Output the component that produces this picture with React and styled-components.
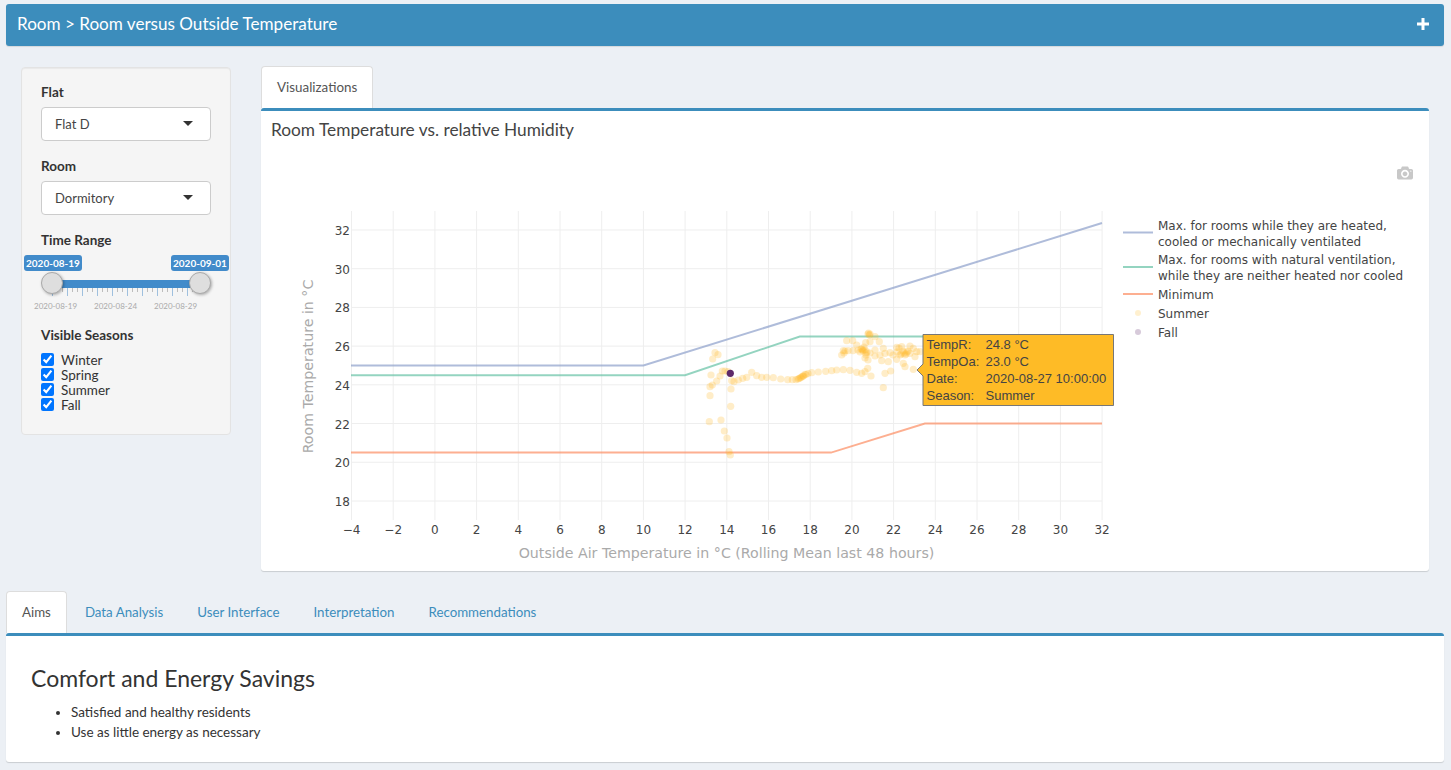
import React from 'react'
import styled, { createGlobalStyle } from 'styled-components'

const X = (v) => 351.5 + (v + 4) * 20.85
const Y = (v) => 501 - (v - 18) * 19.36
const xTicks = Array.from({ length: 19 }, (_, i) => -4 + i * 2)
const yTicks = [18, 20, 22, 24, 26, 28, 30, 32]

const summer = [
  [715, 352.7], [718, 354.7], [712.7, 359], [711, 375], [710, 386.7], [712.3, 385], [716.7, 381], [720, 376],
  [722.3, 371], [725, 371], [728, 371.7], [731.7, 380.7], [734, 381.7], [738.3, 380], [742.7, 378.3], [746.7, 377.3],
  [751.7, 372.3], [756.7, 375.7], [761.7, 377.3], [766.7, 377.3], [773.3, 377.7], [780.7, 379], [787.7, 379.7],
  [792.3, 379.7], [796, 379.7], [798, 379], [800, 378], [802, 376.5], [803, 376], [805, 374.3], [808, 373.5],
  [799, 378.5], [801, 377.5], [803.5, 376], [806, 374.5],
  [811.7, 372.7], [818.3, 372], [825.7, 371.3], [831.7, 370.7], [836.7, 370], [843.3, 369.7], [850, 370.3],
  [856.7, 372.3], [861.7, 373.3], [865, 371.7], [867.7, 368.3], [871, 376], [883.3, 387.7], [890.7, 371], [885, 373.3],
  [731, 389], [710, 395.7], [730.7, 406.3], [709.3, 421.7], [721, 420], [724.3, 431], [727, 438], [729, 451.7], [730.3, 455],
  [868, 334], [870, 334], [868.5, 333], [869.5, 335], [875, 336.7], [846.7, 340.7], [852.7, 340.7], [856.7, 345], [865.7, 342.7], [870, 341.7],
  [879.3, 341.7], [843.3, 350.7], [841.7, 355], [848, 350.7], [853, 350.7], [858, 350], [863, 350], [866, 353],
  [865, 358], [868, 360], [870, 353], [875, 356], [880, 355], [885, 353.3], [890, 352.7], [896.7, 347.3], [901.7, 346.7],
  [910, 346], [913.3, 348.3], [893, 355], [900, 355], [905, 355], [910, 353.3], [916.7, 351.7], [920, 351.7],
  [881.7, 360.7], [888.3, 361.7], [896.7, 359.3], [903.3, 363.3], [905, 366.7], [913.3, 369.3], [915, 356.7],
  [875, 350], [883.3, 348.3], [862, 349], [864, 347], [860, 352], [897, 352], [903, 351], [907, 352], [899, 348],
  [861, 349], [863, 351], [865, 350], [866, 355], [867, 352], [901, 354], [904, 353], [906, 354], [908, 351], [845, 351], [844, 353]
]

const GlobalStyle = createGlobalStyle`
  html, body {
    margin: 0;
    height: 770px;
    overflow: hidden;
    background: #ecf0f5;
    font-family: Lato, "Open Sans", sans-serif;
    font-size: 14px;
    color: #333;
  }
`

const Page = styled.div`
  width: 1451px;
  height: 770px;
  padding-top: 4px;
  box-sizing: border-box;
`

const Header = styled.div`
  margin: 0 7px 0 6px;
  height: 42px;
  padding: 0 15px 3px 11px;
  display: flex;
  align-items: center;
  justify-content: space-between;
  box-sizing: border-box;
  background: #3c8dbc;
  border-radius: 3px;
  box-shadow: 0 1px 1px rgba(0, 0, 0, 0.1);
  color: #fff;
  font-size: 17.1px;
`

const Plus = styled.svg`
  width: 12px;
  height: 12px;
  fill: #fff;
`

const Main = styled.div`
  display: flex;
  gap: 30px;
  margin: 20px 22px 0 21px;
`

const Sidebar = styled.form`
  width: 210px;
  height: 368px;
  margin-top: 1px;
  padding: 17px 19px 0;
  box-sizing: border-box;
  background: #f5f5f5;
  border: 1px solid #e3e3e3;
  border-radius: 4px;
  box-shadow: inset 0 1px 1px rgba(0, 0, 0, 0.05);
`

const Label = styled.div`
  font-size: 13.5px;
  font-weight: 700;
  line-height: 14px;
  color: #333;
  margin-bottom: 8px;
`

const Select = styled.div`
  height: 34px;
  margin-bottom: 18px;
  padding: 0 17px 0 13px;
  display: flex;
  align-items: center;
  justify-content: space-between;
  box-sizing: border-box;
  background: #fff;
  border: 1px solid #ccc;
  border-radius: 4px;
  font-size: 13px;
  color: #444;
`

const Caret = styled.span`
  width: 0;
  height: 0;
  border-left: 5px solid transparent;
  border-right: 5px solid transparent;
  border-top: 5px solid #333;
  margin-top: -2px;
`

const Slider = styled.div`
  position: relative;
  height: 73px;
  margin: 0 -1px;
`

const Track = styled.div`
  position: absolute;
  left: 12px;
  top: 25px;
  width: 148px;
  height: 8px;
  background: #428bca;
`

const Handle = styled.div`
  position: absolute;
  left: ${(p) => p.$left}px;
  top: 17px;
  width: 22px;
  height: 22px;
  box-sizing: border-box;
  border-radius: 50%;
  background: #dedede;
  border: 1px solid #aaa;
  box-shadow: 1px 1px 3px rgba(0, 0, 0, 0.3);
`

const Bubble = styled.div`
  position: absolute;
  left: ${(p) => p.$left}px;
  top: 0;
  height: 16px;
  padding: 0 2px;
  border-radius: 3px;
  background: #428bca;
  color: #fff;
  font-size: 10px;
  font-weight: 700;
  line-height: 16px;
  white-space: nowrap;
`

const Ticks = styled.div`
  position: absolute;
  left: 12px;
  top: 33px;
  width: 148px;
  height: 8px;
  background:
    repeating-linear-gradient(90deg, #9fc0de 0 1px, transparent 1px 15px) 0 0 / 100% 8px no-repeat,
    repeating-linear-gradient(90deg, #bdbdbd 0 1px, transparent 1px 5px) 0 0 / 100% 4px no-repeat;
`

const TickLabel = styled.div`
  position: absolute;
  left: ${(p) => p.$left}px;
  top: 45px;
  font-size: 8px;
  line-height: 12px;
  color: #aaa;
`

const Check = styled.label`
  display: flex;
  align-items: center;
  height: 15px;
  font-size: 13.5px;
  color: #333;

  input {
    width: 13px;
    height: 13px;
    margin: 0 7px 0 0;
  }
`

const Checks = styled.div`
  padding-top: 2px;
`

const Content = styled.div`
  flex: 1;
`

const Tabs = styled.div`
  display: flex;
  height: 42px;
`

const Tab = styled.div`
  display: flex;
  align-items: center;
  padding: 0 15px 2px;
  box-sizing: border-box;
  font-size: 13.4px;
  color: ${(p) => (p.$active ? '#555' : '#3c8dbc')};
  background: ${(p) => (p.$active ? '#fff' : 'transparent')};
  border: 1px solid ${(p) => (p.$active ? '#ddd' : 'transparent')};
  border-bottom: 0;
  border-radius: 4px 4px 0 0;
`

const NoteTab = styled(Tab)`
  padding: 0 16px 2px;
  font-size: 13.3px;

  &:first-child {
    padding: 0 15px 2px;
    margin-right: 1px;
  }
`

const Panel = styled.div`
  box-sizing: border-box;
  background: #fff;
  border-top: 3px solid #3c8dbc;
  border-radius: 3px;
  box-shadow: 0 1px 1px rgba(0, 0, 0, 0.15);
`

const PlotPanel = styled(Panel)`
  position: relative;
  height: 463px;
`

const PlotTitle = styled.h3`
  margin: 0;
  padding: 9px 10px 0;
  height: 34px;
  box-sizing: border-box;
  font-size: 17.3px;
  font-weight: 400;
  line-height: 20px;
  color: #444;
`

const Plot = styled.svg`
  display: block;
  width: 1168px;
  height: 426px;
  font-family: "DejaVu Sans", Verdana, sans-serif;
  font-size: 12px;
`

const Bottom = styled.div`
  margin: 20px 7px 0 6px;
`

const TextPanel = styled(Panel)`
  height: 129px;
  padding: 29px 25px 0;
`

const Heading = styled.h2`
  margin: 0 0 11px;
  font-size: 23px;
  font-weight: 400;
  line-height: 26px;
  color: #333;
`

const Bullets = styled.ul`
  margin: 0;
  padding-left: 40px;
  font-size: 13.5px;
  line-height: 20px;
  color: #333;
`

const seasons = ['Winter', 'Spring', 'Summer', 'Fall']
const legend = [
  { y: 232.5, color: '#8da0cb', lines: [[230, 'Max. for rooms while they are heated,'], [246, 'cooled or mechanically ventilated']] },
  { y: 267, color: '#66c2a5', lines: [[264, 'Max. for rooms with natural ventilation,'], [280, 'while they are neither heated nor cooled']] },
  { y: 294, color: '#fc8d62', lines: [[299, 'Minimum']] }
]
const tipRows = [
  ['TempR:', '24.8 °C', 349],
  ['TempOa:', '23.0 °C', 366],
  ['Date:', '2020-08-27 10:00:00', 383],
  ['Season:', 'Summer', 400]
]

function Chart() {
  return (
    <Plot viewBox="261 145 1168 426">
      {xTicks.map((t) => (
        <line key={t} x1={X(t)} x2={X(t)} y1="211" y2="520" stroke="#eee" />
      ))}
      {yTicks.map((t) => (
        <line key={t} x1="351" x2="1102" y1={Y(t)} y2={Y(t)} stroke="#eee" />
      ))}
      {yTicks.map((t) => (
        <text key={t} x="350" y={Y(t) + 5} textAnchor="end" fill="#444">{t}</text>
      ))}
      {xTicks.map((t) => (
        <text key={t} x={X(t)} y="534" textAnchor="middle" fill="#444">{t < 0 ? `−${-t}` : t}</text>
      ))}
      <text x="726.5" y="558" textAnchor="middle" fontSize="14.2" fill="#aaa">
        Outside Air Temperature in °C (Rolling Mean last 48 hours)
      </text>
      <text transform="translate(313 366.500) rotate(-90)" textAnchor="middle" fontSize="14.2" fill="#aaa">
        Room Temperature in °C
      </text>

      <g fill="none" strokeWidth="2" strokeOpacity="0.7">
        <polyline stroke="#8da0cb" points={`351,${Y(25)} ${X(10)},${Y(25)} 1102,223`} />
        <polyline stroke="#66c2a5" points={`351,${Y(24.5)} ${X(12)},${Y(24.5)} ${X(17.5)},${Y(26.5)} 925,${Y(26.5)}`} />
        <polyline stroke="#fc8d62" points={`351,${Y(20.5)} ${X(19)},${Y(20.5)} ${X(23.5)},${Y(22)} 1102,${Y(22)}`} />
      </g>
      {summer.map(([x, y], i) => (
        <circle key={i} cx={x} cy={y} r="3.6" fill="#ffb923" fillOpacity="0.25" />
      ))}
      <circle cx="730.3" cy="373.3" r="3.6" fill="#5e2a6a" />

      {legend.map((l) => (
        <g key={l.color}>
          <line x1="1123" x2="1153" y1={l.y} y2={l.y} stroke={l.color} strokeWidth="2" strokeOpacity="0.7" />
          {l.lines.map(([y, s]) => (
            <text key={s} x="1158" y={y} fill="#444">{s}</text>
          ))}
        </g>
      ))}
      <circle cx="1138" cy="313" r="3" fill="#ffb923" fillOpacity="0.22" />
      <text x="1158" y="318" fill="#444">Summer</text>
      <circle cx="1138" cy="332" r="3" fill="#5e2a6a" fillOpacity="0.25" />
      <text x="1158" y="337" fill="#444">Fall</text>

      <path d="M917 370 L923 364 V334.5 H1113.5 V405.5 H923 V376 Z" fill="#febb26" stroke="#777" />
      {tipRows.map(([k, v, y]) => (
        <g key={k} fill="#444" fontFamily="'Liberation Sans', Arial, sans-serif" fontSize="13">
          <text x="926.5" y={y}>{k}</text>
          <text x="985.5" y={y}>{v}</text>
        </g>
      ))}

      <g transform="translate(1397 165) scale(0.016)" fill="#c8c8c8">
        <path
          transform="matrix(1 0 0 -1 0 850)"
          d="m500 450c-83 0-150-67-150-150 0-83 67-150 150-150 83 0 150 67 150 150 0 83-67 150-150 150z m400 150h-120c-16 0-34 13-39 29l-31 93c-6 15-23 28-40 28h-340c-16 0-34-13-39-28l-31-93c-6-16-23-29-40-29h-120c-55 0-100-45-100-100v-450c0-55 45-100 100-100h800c55 0 100 45 100 100v450c0 55-45 100-100 100z m-400-550c-138 0-250 112-250 250 0 138 112 250 250 250 138 0 250-112 250-250 0-138-112-250-250-250z m365 380c-19 0-35 16-35 35 0 19 16 35 35 35 19 0 35-16 35-35 0-19-16-35-35-35z"
        />
      </g>
    </Plot>
  )
}

export default function App() {
  return (
    <Page>
      <GlobalStyle />
      <Header>
        <span>Room &gt; Room versus Outside Temperature</span>
        <Plus viewBox="0 0 12 12"><path d="M4.5 0h3v4.500h4.500v3h-4.500v4.500h-3v-4.500h-4.500v-3h4.500z" /></Plus>
      </Header>

      <Main>
        <Sidebar>
          <Label>Flat</Label>
          <Select>Flat D<Caret /></Select>
          <Label>Room</Label>
          <Select>Dormitory<Caret /></Select>
          <Label>Time Range</Label>
          <Slider>
            <Track />
            <Ticks />
            <Handle $left={1} />
            <Handle $left={149} />
            <Bubble $left={-16}>2020-08-19</Bubble>
            <Bubble $left={131}>2020-09-01</Bubble>
            <TickLabel $left={-6}>2020-08-19</TickLabel>
            <TickLabel $left={54}>2020-08-24</TickLabel>
            <TickLabel $left={114}>2020-08-29</TickLabel>
          </Slider>
          <Label>Visible Seasons</Label>
          <Checks>
            {seasons.map((s) => (
              <Check key={s}><input type="checkbox" defaultChecked readOnly />{s}</Check>
            ))}
          </Checks>
        </Sidebar>

        <Content>
          <Tabs><Tab $active>Visualizations</Tab></Tabs>
          <PlotPanel>
            <PlotTitle>Room Temperature vs. relative Humidity</PlotTitle>
            <Chart />
          </PlotPanel>
        </Content>
      </Main>

      <Bottom>
        <Tabs>
          <NoteTab $active>Aims</NoteTab>
          <NoteTab>Data Analysis</NoteTab>
          <NoteTab>User Interface</NoteTab>
          <NoteTab>Interpretation</NoteTab>
          <NoteTab>Recommendations</NoteTab>
        </Tabs>
        <TextPanel>
          <Heading>Comfort and Energy Savings</Heading>
          <Bullets>
            <li>Satisfied and healthy residents</li>
            <li>Use as little energy as necessary</li>
          </Bullets>
        </TextPanel>
      </Bottom>
    </Page>
  )
}
